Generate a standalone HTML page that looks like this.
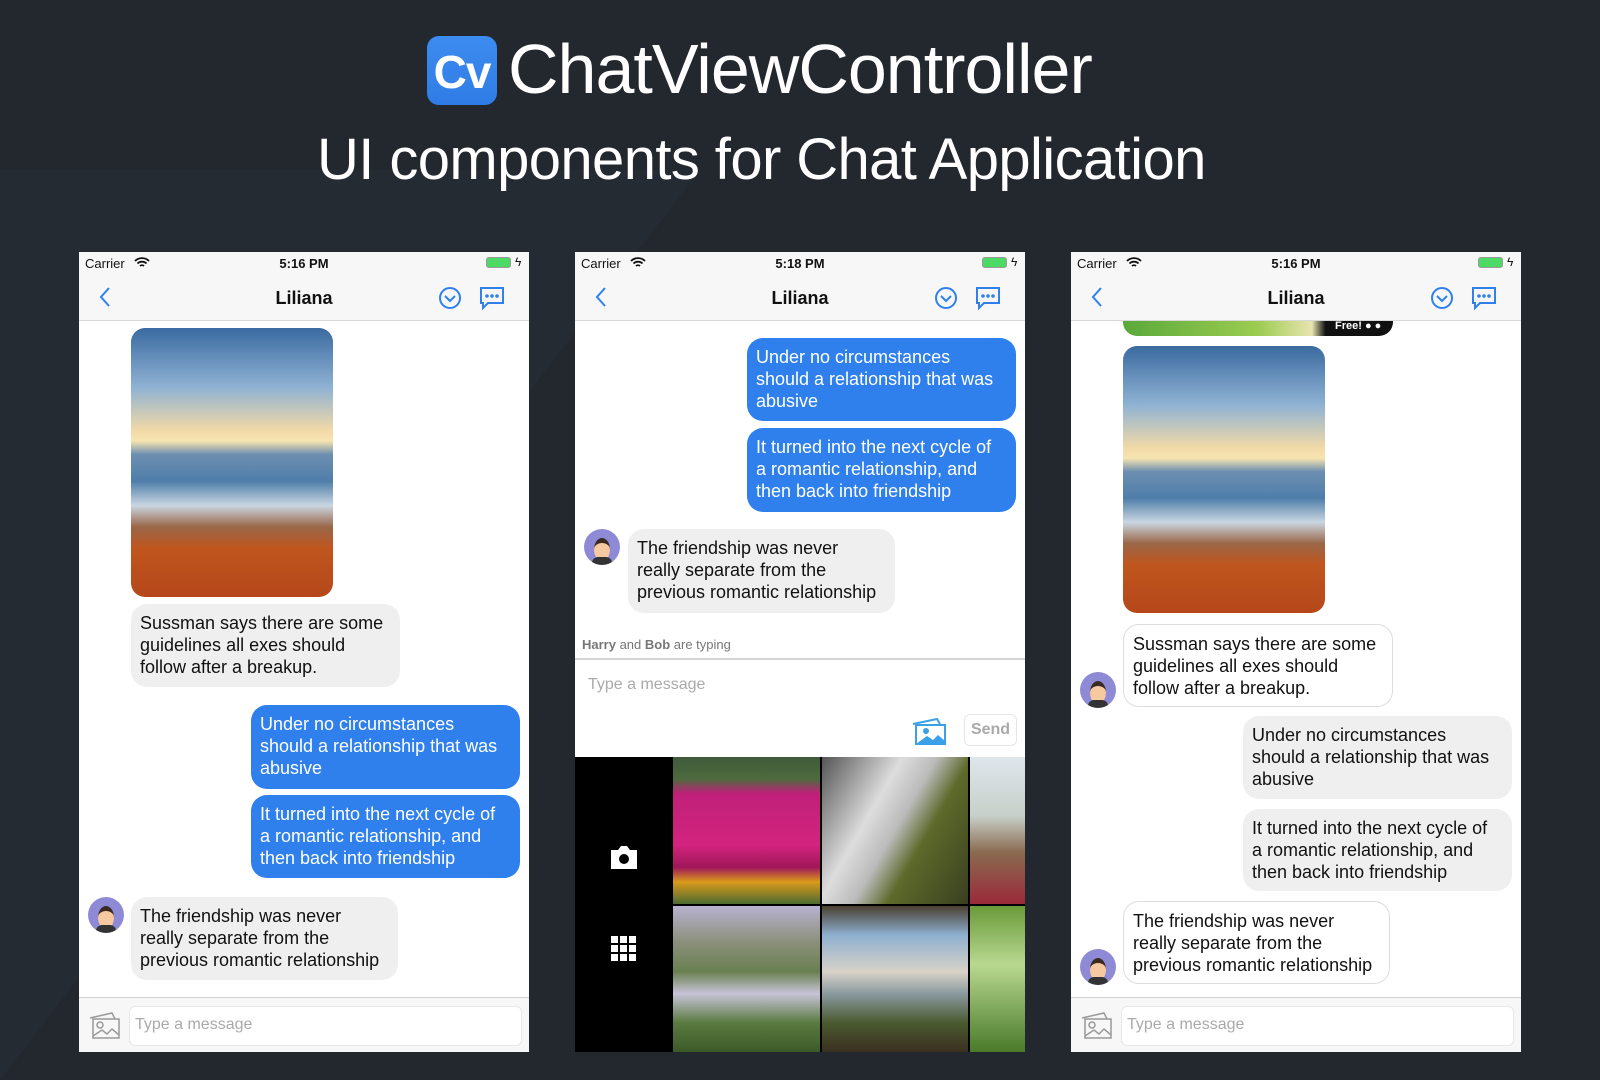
<!DOCTYPE html>
<html><head><meta charset="utf-8">
<style>
*{margin:0;padding:0;box-sizing:border-box}
body{width:1600px;height:1080px;overflow:hidden;background:#23282f;font-family:"Liberation Sans",sans-serif;position:relative}
.bgtri{position:absolute;left:0;top:170px;width:0;height:0;border-left:700px solid #262b33;border-top:0 solid transparent;border-bottom:910px solid transparent;opacity:.9}
.abs{position:absolute}
.phone{position:absolute;top:252px;width:450px;height:800px;background:#fff;overflow:hidden}
.status{position:absolute;left:0;top:0;width:450px;height:22px;background:#f7f7f7;font-size:13px;color:#111}
.nav{position:absolute;left:0;top:22px;width:450px;height:47px;background:#f7f7f7;border-bottom:1.5px solid #d8d8d8}
.nav .t{position:absolute;left:0;width:450px;text-align:center;top:14px;font-size:18px;font-weight:bold;color:#111}
.b{position:absolute;border-radius:16px;font-size:18px;line-height:22px;padding:8px 14px 8px 9px;color:#111}
.blue{background:#2f80ed;color:#fff}
.gray{background:#efefef}
.wb{background:#fff;border:1px solid #ddd}
.av{position:absolute;width:36px;height:36px;border-radius:50%;background:#8e8ad6;overflow:hidden}
.av:before{content:"";position:absolute;left:10px;top:9px;width:16px;height:18px;border-radius:50%;background:#f6c9a0;border-top:5px solid #3a2a22}
.av:after{content:"";position:absolute;left:8px;top:28px;width:20px;height:10px;background:#333;border-radius:6px 6px 0 0}
.sun{position:absolute;border-radius:14px;overflow:hidden;background:linear-gradient(180deg,#3a6aa0 0%,#8fb2d3 22%,#f1d9a8 38%,#f7e4b0 42%,#6d8fb0 47%,#4f7eaa 57%,#c9d6e0 66%,#9a6648 74%,#c0561e 82%,#b5471a 100%)}
.bottom{position:absolute;left:0;top:745px;width:450px;height:55px;background:#f7f7f7;border-top:1.5px solid #d0d0d0}
.inp{position:absolute;left:50px;top:8px;width:393px;height:40px;background:#fff;border:1px solid #e8e8e8;border-radius:6px;font-size:16px;color:#aaa;padding:9px 5px}
</style></head><body>
<div class="bgtri"></div>

<div class="abs" style="left:427px;top:36px;width:70px;height:69px;border-radius:12px;background:linear-gradient(180deg,#3d8cf0,#2f7ce6);"></div>
<div class="abs" style="left:427px;top:45px;width:70px;text-align:center;font-size:46px;font-weight:bold;color:#fff;letter-spacing:-1px">Cv</div>
<div class="abs" style="left:508px;top:29px;font-size:70px;color:#fff;letter-spacing:-1px">ChatViewController</div>
<div class="abs" style="left:317px;top:126px;font-size:58px;color:#fff;letter-spacing:-0.6px">UI components for Chat Application</div>

<!-- Phone 1 -->
<div class="phone" style="left:79px">
  <div class="status"><span class="abs" style="left:6px;top:4px">Carrier</span><svg class="abs" style="left:55px;top:5px" width="16" height="12"><path d="M1 4a10 10 0 0 1 14 0M3.5 6.5a6.5 6.5 0 0 1 9 0M6 9a3 3 0 0 1 4 0" fill="none" stroke="#111" stroke-width="1.8"/></svg><span class="abs" style="left:0;width:450px;text-align:center;top:4px;font-weight:bold">5:16 PM</span><span class="abs" style="left:407px;top:5px;width:25px;height:11px;border:1px solid #999;border-radius:3px;background:#4cd964"></span><span class="abs" style="left:436px;top:3px;font-size:12px">ϟ</span></div>
  <div class="nav"><svg class="abs" style="left:20px;top:12px" width="12" height="22"><path d="M10 2L2 11l8 9" fill="none" stroke="#2f80ed" stroke-width="2"/></svg><div class="t">Liliana</div>
   <svg class="abs" style="left:359px;top:12px" width="24" height="24"><circle cx="12" cy="12" r="10" fill="none" stroke="#2f80ed" stroke-width="2"/><path d="M7 10l5 5 5-5" fill="none" stroke="#2f80ed" stroke-width="2"/></svg>
   <svg class="abs" style="left:400px;top:11px" width="26" height="26"><path d="M2 3h22v15H9l-5 5v-5H2z" fill="none" stroke="#2f80ed" stroke-width="2"/><circle cx="8" cy="11" r="1.8" fill="#2f80ed"/><circle cx="13" cy="11" r="1.8" fill="#2f80ed"/><circle cx="18" cy="11" r="1.8" fill="#2f80ed"/></svg></div>
  <div class="sun" style="left:52px;top:76px;width:202px;height:269px"></div>
  <div class="b gray" style="left:52px;top:352px;width:269px;height:83px">Sussman says there are some guidelines all exes should follow after a breakup.</div>
  <div class="b blue" style="left:172px;top:453px;width:269px;height:84px">Under no circumstances should a relationship that was abusive</div>
  <div class="b blue" style="left:172px;top:543px;width:269px;height:83px">It turned into the next cycle of a romantic relationship, and then back into friendship</div>
  <div class="av" style="left:9px;top:645px"></div>
  <div class="b gray" style="left:52px;top:645px;width:267px;height:83px">The friendship was never really separate from the previous romantic relationship</div>
  <div class="bottom"><svg class="abs" style="left:8px;top:12px" width="34" height="30"><path d="M3 8l22-5 3 6" fill="none" stroke="#999" stroke-width="1.5"/><rect x="6" y="9" width="26" height="19" fill="none" stroke="#999" stroke-width="1.5"/><circle cx="13" cy="15" r="3" fill="none" stroke="#999" stroke-width="1.5"/><path d="M6 26l9-6 5 4 5-5 7 6" fill="none" stroke="#999" stroke-width="1.5"/></svg><div class="inp">Type a message</div></div>
</div>

<!-- Phone 2 -->
<div class="phone" style="left:575px">
  <div class="status"><span class="abs" style="left:6px;top:4px">Carrier</span><svg class="abs" style="left:55px;top:5px" width="16" height="12"><path d="M1 4a10 10 0 0 1 14 0M3.5 6.5a6.5 6.5 0 0 1 9 0M6 9a3 3 0 0 1 4 0" fill="none" stroke="#111" stroke-width="1.8"/></svg><span class="abs" style="left:0;width:450px;text-align:center;top:4px;font-weight:bold">5:18 PM</span><span class="abs" style="left:407px;top:5px;width:25px;height:11px;border:1px solid #999;border-radius:3px;background:#4cd964"></span><span class="abs" style="left:436px;top:3px;font-size:12px">ϟ</span></div>
  <div class="nav"><svg class="abs" style="left:20px;top:12px" width="12" height="22"><path d="M10 2L2 11l8 9" fill="none" stroke="#2f80ed" stroke-width="2"/></svg><div class="t">Liliana</div>
   <svg class="abs" style="left:359px;top:12px" width="24" height="24"><circle cx="12" cy="12" r="10" fill="none" stroke="#2f80ed" stroke-width="2"/><path d="M7 10l5 5 5-5" fill="none" stroke="#2f80ed" stroke-width="2"/></svg>
   <svg class="abs" style="left:400px;top:11px" width="26" height="26"><path d="M2 3h22v15H9l-5 5v-5H2z" fill="none" stroke="#2f80ed" stroke-width="2"/><circle cx="8" cy="11" r="1.8" fill="#2f80ed"/><circle cx="13" cy="11" r="1.8" fill="#2f80ed"/><circle cx="18" cy="11" r="1.8" fill="#2f80ed"/></svg></div>
  <div class="b blue" style="left:172px;top:86px;width:269px;height:83px">Under no circumstances should a relationship that was abusive</div>
  <div class="b blue" style="left:172px;top:176px;width:269px;height:84px">It turned into the next cycle of a romantic relationship, and then back into friendship</div>
  <div class="av" style="left:9px;top:277px"></div>
  <div class="b gray" style="left:53px;top:277px;width:267px;height:84px">The friendship was never really separate from the previous romantic relationship</div>
  <div class="abs" style="left:7px;top:385px;font-size:13px;color:#777"><b>Harry</b> and <b>Bob</b> are typing</div>
  <div class="abs" style="left:0;top:406px;width:450px;height:2px;background:#d4d4d4"></div>
  <div class="abs" style="left:13px;top:424px;font-size:16px;color:#aaa">Type a message</div>
  <svg class="abs" style="left:336px;top:464px" width="36" height="30"><path d="M2 8l24-5 3 5" fill="none" stroke="#3aa0e8" stroke-width="2"/><rect x="5" y="9" width="29" height="19" fill="#fff" stroke="#3aa0e8" stroke-width="2"/><circle cx="15" cy="15" r="3" fill="#3aa0e8"/><path d="M5 28l11-8 6 4 5-5 7 6v3z" fill="#3aa0e8"/></svg>
  <div class="abs" style="left:389px;top:462px;width:53px;height:32px;border:1px solid #e6e6e6;border-radius:6px;font-size:16px;font-weight:bold;color:#aaa;text-align:center;line-height:30px">Send</div>
  <div class="abs" style="left:0;top:505px;width:450px;height:295px;background:#000"></div>
  <svg class="abs" style="left:34px;top:592px" width="30" height="26"><path d="M2 6h7l3-4h6l3 4h7v19H2z" fill="#fff"/><circle cx="15" cy="15" r="5" fill="#000"/></svg>
  <svg class="abs" style="left:36px;top:684px" width="26" height="26"><g fill="#fff"><rect x="0" y="0" width="7" height="7"/><rect x="9" y="0" width="7" height="7"/><rect x="18" y="0" width="7" height="7"/><rect x="0" y="9" width="7" height="7"/><rect x="9" y="9" width="7" height="7"/><rect x="18" y="9" width="7" height="7"/><rect x="0" y="18" width="7" height="7"/><rect x="9" y="18" width="7" height="7"/><rect x="18" y="18" width="7" height="7"/></g></svg>
  <div class="abs" style="left:98px;top:505px;width:147px;height:147px;background:linear-gradient(180deg,#3f5a3a 0%,#4d6a3e 15%,#c0207a 25%,#d3247e 60%,#a0165a 75%,#d99a1a 85%,#4d6a30 100%)"></div>
  <div class="abs" style="left:247px;top:505px;width:146px;height:147px;background:linear-gradient(120deg,#555 0%,#ddd 35%,#bbb 50%,#5c6a2a 65%,#3a3f20 100%)"></div>
  <div class="abs" style="left:395px;top:505px;width:55px;height:147px;background:linear-gradient(180deg,#dfe6ec 0%,#c7cfc9 40%,#8a6a50 65%,#9a2a3a 100%)"></div>
  <div class="abs" style="left:98px;top:654px;width:147px;height:146px;background:linear-gradient(180deg,#b9b2d0 0%,#8a8f7a 25%,#6a8050 45%,#c8c4d8 60%,#5a7a40 80%,#3c5a28 100%)"></div>
  <div class="abs" style="left:247px;top:654px;width:146px;height:146px;background:linear-gradient(180deg,#4a4030 0%,#8eb0d0 20%,#d8d2c8 45%,#8a9aa0 60%,#4a5a30 80%,#3a3020 100%)"></div>
  <div class="abs" style="left:395px;top:654px;width:55px;height:146px;background:linear-gradient(180deg,#6a9a3a,#b8d890 40%,#4a7a2a)"></div>
</div>

<!-- Phone 3 -->
<div class="phone" style="left:1071px">
  <div class="status"><span class="abs" style="left:6px;top:4px">Carrier</span><svg class="abs" style="left:55px;top:5px" width="16" height="12"><path d="M1 4a10 10 0 0 1 14 0M3.5 6.5a6.5 6.5 0 0 1 9 0M6 9a3 3 0 0 1 4 0" fill="none" stroke="#111" stroke-width="1.8"/></svg><span class="abs" style="left:0;width:450px;text-align:center;top:4px;font-weight:bold">5:16 PM</span><span class="abs" style="left:407px;top:5px;width:25px;height:11px;border:1px solid #999;border-radius:3px;background:#4cd964"></span><span class="abs" style="left:436px;top:3px;font-size:12px">ϟ</span></div>
  <div class="abs" style="left:52px;top:60px;width:270px;height:24px;border-radius:0 0 14px 14px;background:linear-gradient(90deg,#5aa83a,#9ccc50 50%,#e8e4b0 70%,#111 75%,#111)"></div>
  <div class="abs" style="left:264px;top:68px;font-size:11px;font-weight:bold;color:#fff">Free!  ● ●</div>
  <div class="nav"><svg class="abs" style="left:20px;top:12px" width="12" height="22"><path d="M10 2L2 11l8 9" fill="none" stroke="#2f80ed" stroke-width="2"/></svg><div class="t">Liliana</div>
   <svg class="abs" style="left:359px;top:12px" width="24" height="24"><circle cx="12" cy="12" r="10" fill="none" stroke="#2f80ed" stroke-width="2"/><path d="M7 10l5 5 5-5" fill="none" stroke="#2f80ed" stroke-width="2"/></svg>
   <svg class="abs" style="left:400px;top:11px" width="26" height="26"><path d="M2 3h22v15H9l-5 5v-5H2z" fill="none" stroke="#2f80ed" stroke-width="2"/><circle cx="8" cy="11" r="1.8" fill="#2f80ed"/><circle cx="13" cy="11" r="1.8" fill="#2f80ed"/><circle cx="18" cy="11" r="1.8" fill="#2f80ed"/></svg></div>
  <div class="sun" style="left:52px;top:94px;width:202px;height:267px"></div>
  <div class="b wb" style="left:52px;top:372px;width:270px;height:83px">Sussman says there are some guidelines all exes should follow after a breakup.</div>
  <div class="av" style="left:9px;top:420px"></div>
  <div class="b gray" style="left:172px;top:464px;width:269px;height:83px">Under no circumstances should a relationship that was abusive</div>
  <div class="b gray" style="left:172px;top:557px;width:269px;height:82px">It turned into the next cycle of a romantic relationship, and then back into friendship</div>
  <div class="b wb" style="left:52px;top:649px;width:267px;height:83px">The friendship was never really separate from the previous romantic relationship</div>
  <div class="av" style="left:9px;top:697px"></div>
  <div class="bottom"><svg class="abs" style="left:8px;top:12px" width="34" height="30"><path d="M3 8l22-5 3 6" fill="none" stroke="#999" stroke-width="1.5"/><rect x="6" y="9" width="26" height="19" fill="none" stroke="#999" stroke-width="1.5"/><circle cx="13" cy="15" r="3" fill="none" stroke="#999" stroke-width="1.5"/><path d="M6 26l9-6 5 4 5-5 7 6" fill="none" stroke="#999" stroke-width="1.5"/></svg><div class="inp">Type a message</div></div>
</div>
</body></html>
